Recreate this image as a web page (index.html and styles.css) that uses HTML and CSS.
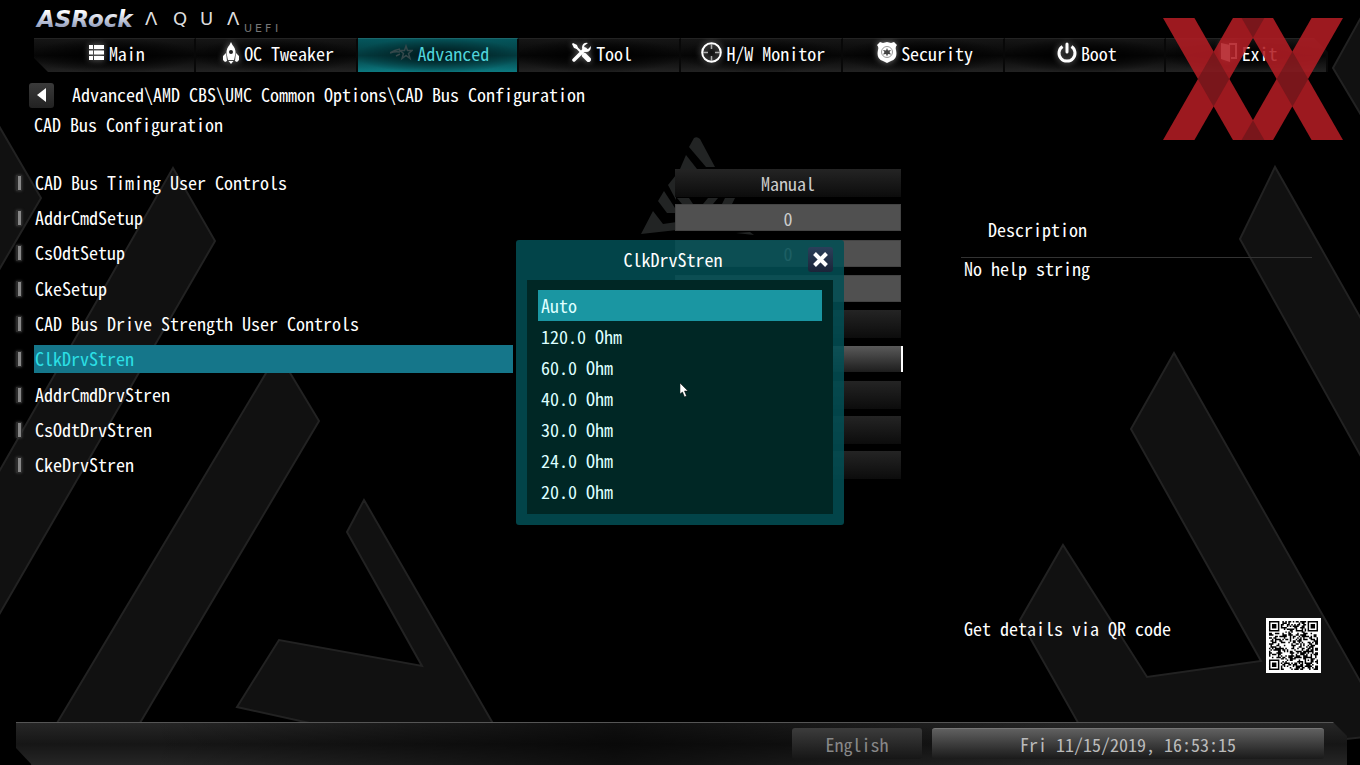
FILE: index.html
```html
<!DOCTYPE html>
<html lang="en">
<head>
    <meta charset="UTF-8">
    <meta name="viewport" content="width=device-width, initial-scale=1.0">
    <title>ASRock AQUA UEFI</title>
    <link rel="stylesheet" href="styles.css">
</head>
<body>
    <svg class="backdrop" viewBox="0 0 1360 765" preserveAspectRatio="xMidYMid slice" aria-hidden="true">
        <g fill="#111" stroke="#222" stroke-width="2">
            <path d="M-4 121L41 198L-4 275Z"/>
            <path d="M173 168L215 241L-4 620V477Z"/>
            <path d="M278 353L319 421L115 765H32Z"/>
            <path d="M364 500L517 765H500L237 707L279 640L422 666L347 532Z"/>
            <path d="M1364 12L1333 68L1364 120Z"/>
            <path d="M1275 167L1240 239L1364 462V324Z"/>
            <path d="M1174 353L1364 688V737L1102 765L1020 620L1063 545L1147 677L1261 661L1131 429Z"/>
        </g>
        <g fill="#222424">
            <path d="M694 138q3-2 6 1l15 28h-9l-17-20Z"/>
            <path d="M686 155l11 14h-17Z"/>
            <path d="M676 175v25l-8-15Z"/>
            <path d="M664 191l11 17v5h-8l-9-12Z"/>
            <path d="M653 211l10 13 14-2v8l-36 4Z"/>
            <path d="M677 198h12l4 6h-11ZM708 198h10l-5 6h-10ZM725 198h10l-3 6h-10Z"/>
            <path d="M736 233l14-1 4 3Z"/>
        </g>
    </svg>

    <header class="brand">
        <svg class="logo" width="250" height="28" viewBox="0 0 250 28" role="img" aria-label="ASRock AQUA UEFI">
            <defs>
                <linearGradient id="steel" x1="0" y1="0" x2="0" y2="1">
                    <stop offset="0.2" stop-color="#fff"/>
                    <stop offset="0.9" stop-color="#8390b4"/>
                </linearGradient>
            </defs>
            <text class="logo-asrock" x="3" y="21" fill="url(#steel)">ASRock</text>
            <text class="logo-aqua" x="111 139 166 193" y="19">ΛQUΛ</text>
            <text class="logo-uefi" x="210 221 231 241" y="26">UEFI</text>
        </svg>
    </header>

    <nav class="tabs">
        <a class="tab" href="#main">
            <svg width="17" height="17" viewBox="0 0 17 17"><path fill="#fff" d="M1 1h4v4H1zM6 1h10v4H6zM1 6.500h4v4H1zM6 6.500h10v4H6zM1 12h4v4H1zM6 12h10v4H6z"/></svg>
            Main
        </a>
        <a class="tab" href="#oc">
            <svg width="18" height="22" viewBox="0 0 18 22"><path fill="#fff" d="M9 0q1 2 1.500 3 3 3 3 8l-1.500 7H6l-1.500-7q0-5 3-8Q8 2 9 0zM4 11l1 8-2 1-2-2v-4zM14 11l3 3v4l-2 2-2-1zM6.500 19h5L9 22z"/><circle cx="9" cy="10" r="2" fill="#222"/></svg>
            OC Tweaker
        </a>
        <a class="tab active" href="#advanced">
            <svg width="23" height="18" viewBox="0 0 23 18"><path fill="none" stroke="#34484b" stroke-width="1.500" d="M16 2l1.500 4.500H22l-3.500 3 1.500 5-4-3-4 3 1.500-5-3.500-3h4.500zM10 5Q4 6 0 9q5-2 10-1M10 10l-4 2"/></svg>
            Advanced
        </a>
        <a class="tab" href="#tool">
            <svg width="21" height="21" viewBox="0 0 21 21"><path stroke="#fff" stroke-width="2" d="M3 3l9 9"/><path fill="#fff" d="M1 2l1-1 4 2 1 3-1 1-3-1z"/><path stroke="#fff" stroke-width="5" stroke-linecap="round" d="M13.500 13.500l4 4"/><path stroke="#fff" stroke-width="3.500" stroke-linecap="round" d="M3 18L14 7"/><path fill="#fff" d="M17 1q-5-1-6 4 0 5 4 5 5 0 5-6l-3 3-3-1-1-2z"/></svg>
            Tool
        </a>
        <a class="tab" href="#monitor">
            <svg width="21" height="21" viewBox="0 0 21 21"><circle cx="10.500" cy="10.500" r="9.300" fill="none" stroke="#fff" stroke-width="2"/><path stroke="#aaa" stroke-width="1.500" d="M10.500 2v5M10.500 14v5M2 10.500h5M14 10.500h5"/></svg>
            H/W Monitor
        </a>
        <a class="tab" href="#security">
            <svg width="20" height="21" viewBox="0 0 20 21"><path fill="#fff" d="M3 0l3 1 4-1 4 1 3-1 3 3q-2 2-1 5 2 9-5 11l-4 2-4-2Q-1 17 1 8q1-3-1-5z"/><circle cx="10" cy="10" r="5.500" fill="none" stroke="#999"/><path fill="#444" d="M10 6l1 2.500 3-.5-1.500 2 1.500 2.500-3-.5-1 2.500-1-2.500-3 .5 1.500-2.500L6 8l3 .5z"/></svg>
            Security
        </a>
        <a class="tab" href="#boot">
            <svg width="20" height="21" viewBox="0 0 20 21"><path fill="none" stroke="#fff" stroke-width="3" d="M5.500 4.500A8 8 0 1 0 14.500 4.500"/><path stroke="#fff" stroke-width="3" stroke-linecap="round" d="M10 2v8"/></svg>
            Boot
        </a>
        <a class="tab" href="#exit">
            <svg width="18" height="21" viewBox="0 0 18 21"><path fill="none" stroke="#fff" stroke-width="2" d="M9 2h7v14h-5"/><path fill="#fff" d="M1 1l9 2v17l-9-3z"/></svg>
            Exit
        </a>
    </nav>

    <main class="content">
        <section class="settings">
            <div class="path">
                <button class="back" type="button" aria-label="Back">
                    <svg width="10" height="16" viewBox="0 0 10 16"><path fill="#fff" d="M9 1v14L0 8z"/></svg>
                </button>
                <span>Advanced\AMD CBS\UMC Common Options\CAD Bus Configuration</span>
            </div>
            <h1>CAD Bus Configuration</h1>
            <div class="options">
                <div class="option"><label for="timing">CAD Bus Timing User Controls</label><button class="value" id="timing" type="button">Manual</button></div>
                <div class="option"><label for="addr-setup">AddrCmdSetup</label><input class="value" id="addr-setup" type="text" value="0"></div>
                <div class="option"><label for="odt-setup">CsOdtSetup</label><input class="value" id="odt-setup" type="text" value="0"></div>
                <div class="option"><label for="cke-setup">CkeSetup</label><input class="value" id="cke-setup" type="text"></div>
                <div class="option"><label for="drive">CAD Bus Drive Strength User Controls</label><button class="value" id="drive" type="button"></button></div>
                <div class="option selected"><label for="clk-drv">ClkDrvStren</label><button class="value" id="clk-drv" type="button"></button></div>
                <div class="option"><label for="addr-drv">AddrCmdDrvStren</label><button class="value" id="addr-drv" type="button"></button></div>
                <div class="option"><label for="odt-drv">CsOdtDrvStren</label><button class="value" id="odt-drv" type="button"></button></div>
                <div class="option"><label for="cke-drv">CkeDrvStren</label><button class="value" id="cke-drv" type="button"></button></div>
            </div>
        </section>

        <aside class="help">
            <h2>Description</h2>
            <p>No help string</p>
            <div class="details">
                <span>Get details via QR code</span>
                <svg class="qr" id="qr" viewBox="-2 -2 37 37" role="img" aria-label="QR code"></svg>
            </div>
        </aside>
    </main>

    <footer class="statusbar">
        <button class="language" type="button">English</button>
        <div class="clock">Fri 11/15/2019, 16:53:15</div>
    </footer>

    <div class="overlay">
        <div class="popup" role="dialog" aria-labelledby="popup-title">
            <div class="popup-head">
                <h2 id="popup-title">ClkDrvStren</h2>
                <button class="close" type="button" aria-label="Close">
                    <svg width="15" height="15" viewBox="0 0 15 15"><path stroke="#fff" stroke-width="4" d="M1.500 1.500l12 12M13.500 1.500l-12 12"/></svg>
                </button>
            </div>
            <div class="choices">
                <button class="choice current" type="button">Auto</button>
                <button class="choice" type="button">120.0 Ohm</button>
                <button class="choice" type="button">60.0 Ohm</button>
                <button class="choice" type="button">40.0 Ohm</button>
                <button class="choice" type="button">30.0 Ohm</button>
                <button class="choice" type="button">24.0 Ohm</button>
                <button class="choice" type="button">20.0 Ohm</button>
            </div>
        </div>
    </div>

    <svg class="watermark" width="180" height="122" viewBox="0 0 538 364" aria-hidden="true">
        <g opacity="0.88">
            <path fill="#b21d24" d="M0 0H94L303 364H209Z"/>
            <path fill="#b21d24" d="M209 0H303L94 364H0Z"/>
            <path fill="#b21d24" d="M235 0H329L538 364H444Z"/>
            <path fill="#b21d24" d="M444 0H538L329 364H235Z"/>
            <path fill="#8a1a1f" d="M235 0H303L269 59ZM235 364H303L269 305Z"/>
            <path fill="#8a1a1f" d="M151 100L198 182L151 264L104 182ZM387 100L434 182L387 264L340 182Z"/>
        </g>
    </svg>
    <svg class="cursor" width="10" height="16" viewBox="0 0 10 16" aria-hidden="true"><path fill="#fff" stroke="#000" stroke-width="0.500" d="M0 0v11l2.500-2 2 5 2-1-2-5H8z"/></svg>

    <script src="script.js"></script>
</body>
</html>
```

FILE: styles.css
```css
*, *::before {
    box-sizing: border-box;
}

body {
    margin: 0;
    min-height: 100vh;
    display: flex;
    flex-direction: column;
    position: relative;
    background: #000;
    color: #fff;
    font-family: "Noto Sans Mono CJK JP", "Noto Sans CJK JP", "Liberation Mono", monospace;
    font-feature-settings: "hwid";
    font-size: 18px;
    line-height: 24px;
    overflow-x: hidden;
}

h1, h2, p {
    margin: 0;
    font-size: 18px;
    font-weight: normal;
}

button, input {
    font: inherit;
    font-feature-settings: inherit;
    color: inherit;
    border: none;
    padding: 0;
}

.backdrop {
    position: absolute;
    inset: 0;
    width: 100%;
    height: 100%;
    z-index: -1;
}

/* header */
.brand {
    height: 38px;
    padding: 6px 34px 0;
}

.logo {
    display: block;
}

.logo-asrock {
    font: bold italic 23px "DejaVu Sans", sans-serif;
}

.logo-aqua {
    font: 18px "DejaVu Sans", sans-serif;
    fill: #ddd;
}

.logo-uefi {
    font: 11px "DejaVu Sans", sans-serif;
    fill: #777;
}

.tabs {
    display: flex;
    height: 34px;
    margin: 0 32px 0 34px;
    clip-path: polygon(0 0, calc(100% - 14px) 0, 100% 14px, 100% 100%, 14px 100%, 0 20px);
}

.tab {
    flex: 1;
    display: flex;
    align-items: center;
    justify-content: center;
    gap: 4px;
    padding: 0 0 6px 5px;
    text-decoration: none;
    color: #fff;
    border-top: 1px solid #232323;
    border-right: 2px solid #080808;
    background: radial-gradient(ellipse at center, rgba(0, 0, 0, 0.9) 20%, rgba(0, 0, 0, 0) 75%), linear-gradient(#161616, #060606 50%, #222);
}

.tab svg {
    filter: drop-shadow(0 0 3px rgba(255, 255, 255, 0.5));
}

.tab.active {
    color: #4fd3da;
    border-top-color: #1b666b;
    background: radial-gradient(ellipse at center, rgba(0, 25, 28, 0.9) 10%, rgba(0, 40, 43, 0) 75%), linear-gradient(#05565c, #033c40 50%, #0c7980);
}

.tab.active svg {
    filter: none;
}

/* settings */
.content {
    flex: 1;
    display: grid;
    grid-template-columns: 53fr 27fr;
}

.settings {
    padding: 10px 0 0 16px;
}

.path {
    display: flex;
    align-items: center;
    gap: 18px;
    padding-left: 13px;
}

.path span {
    padding-bottom: 2px;
}

.back {
    width: 25px;
    height: 25px;
    display: flex;
    align-items: center;
    justify-content: center;
    border-radius: 3px;
    background: linear-gradient(#3a3a3a, #222);
}

h1 {
    margin: 4px 0 29px 18px;
}

.options {
    display: grid;
    grid-auto-rows: 1fr;
    min-height: 318px;
}

.option {
    display: flex;
    align-items: center;
}

.option::before {
    content: "";
    flex: none;
    width: 6px;
    height: 16px;
    margin-right: 12px;
    background: #888;
    border: solid #2c2c2c;
    border-width: 1px 1px 1px 2px;
    box-shadow: 0 0 3px #444;
}

.option label {
    flex: 1;
    padding: 1px 1px 3px;
    margin-right: 162px;
}

.value {
    width: 226px;
    height: 28px;
    color: #ccc;
    text-align: center;
    background: linear-gradient(#242424, #0c0c0c);
}

input.value {
    height: 27px;
    border: 1px solid #444;
    background: #505050;
}

.selected label {
    color: #2ce0e6;
    background: #15768a;
}

.selected .value {
    height: 26px;
    background: linear-gradient(#5a5a5a, #1d1d1d);
    box-shadow: 2px 0 0 #fff;
}

/* description column */
.help {
    display: flex;
    flex-direction: column;
    padding: 145px 48px 49px 60px;
}

.help h2 {
    padding: 0 27px 16px;
    border-bottom: 1px solid #333;
}

.help p {
    padding-left: 3px;
    line-height: 20px;
}

.details {
    display: flex;
    justify-content: space-between;
    margin: auto -9px 0 3px;
}

.details span {
    line-height: 20px;
}

.qr {
    width: 55px;
    height: 55px;
    background: #fff;
}

/* bottom bar */
.statusbar {
    display: flex;
    justify-content: flex-end;
    gap: 10px;
    margin: 0 13px 0 16px;
    padding: 5px 23px 6px;
    border-top: 1px solid #555;
    background: linear-gradient(90deg, rgba(0, 0, 0, 0) 10%, rgba(0, 0, 0, 0.6) 45%, rgba(0, 0, 0, 0) 80%), linear-gradient(#262626, #161616 50%, #262626);
    clip-path: polygon(0 0, calc(100% - 14px) 0, 100% 14px, 100% 100%, 16px 100%, 0 26px);
}

.language, .clock {
    height: 31px;
    line-height: 30px;
    text-align: center;
    border-radius: 3px;
}

.language {
    width: 130px;
    color: #888;
    background: linear-gradient(#3c3c3c, #161616);
}

.clock {
    width: 392px;
    color: #bbb;
    border-top: 1px solid #777;
    background: linear-gradient(#606060, #1a1a1a);
}

/* popup */
.overlay {
    position: absolute;
    inset: 0;
    display: grid;
    place-items: center;
    padding-bottom: 1px;
}

.popup {
    width: 328px;
    padding: 7px 11px 11px;
    border-radius: 3px;
    background: rgba(2, 78, 84, 0.87);
}

.popup-head {
    display: flex;
    align-items: center;
    margin-bottom: 8px;
}

.popup-head h2 {
    flex: 1;
    padding-left: 11px;
    text-align: center;
}

.close {
    width: 25px;
    height: 25px;
    display: flex;
    align-items: center;
    justify-content: center;
    border-radius: 3px;
    background: linear-gradient(#2b3f5a, #1b2438);
}

.choices {
    display: flex;
    flex-direction: column;
    padding: 10px 11px 7px;
    background: #002725;
}

.choice {
    height: 31px;
    padding: 0 3px 1px;
    color: #dff;
    text-align: left;
    background: none;
}

.choice.current {
    background: #1a96a2;
}

.watermark {
    position: absolute;
    top: 18px;
    right: 17px;
}

.cursor {
    position: absolute;
    top: 50%;
    left: 50%;
}
```

FILE: script.js
```js
const qr = document.getElementById('qr');
const size = 33;
let seed = 20191115;
let path = '';

function finder(x, y) {
    if (x > 7 && x < size - 8 || y > 7 && y < size - 8 || x > 7 && y > 7) {
        return null;
    }
    const cx = x < 8 ? 3 : size - 4;
    const cy = y < 8 ? 3 : size - 4;
    const d = Math.max(Math.abs(x - cx), Math.abs(y - cy));
    return d !== 2 && d !== 4;
}

for (let y = 0; y < size; y++) {
    for (let x = 0; x < size; x++) {
        seed = (seed * 1103515245 + 12345) % 2147483648;
        let dark = finder(x, y);
        const a = Math.max(Math.abs(x - 26), Math.abs(y - 26));
        if (dark === null) {
            dark = a < 3 ? a !== 1 : seed / 2147483648 < 0.5;
        }
        if (dark) {
            path += 'M' + x + ' ' + y + 'h1v1h-1z';
        }
    }
}

qr.innerHTML = '<path fill="#000" d="' + path + '"/>';
```
